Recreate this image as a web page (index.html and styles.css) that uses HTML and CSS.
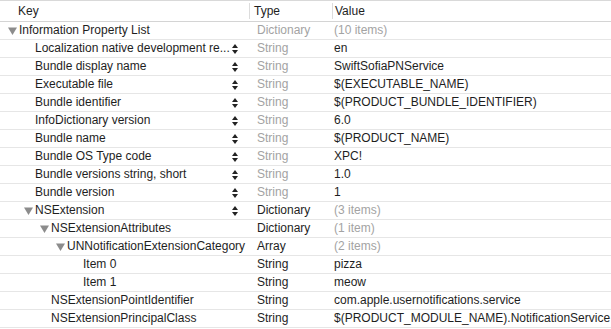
FILE: index.html
```html
<!DOCTYPE html>
<html lang="en">
<head>
    <meta charset="UTF-8">
    <title>Info.plist</title>
    <link rel="stylesheet" href="styles.css">
</head>
<body>

<div class="plist">
    <!-- Column headers -->
    <div class="row header">
        <div class="cell key">Key</div>
        <div class="cell type">Type</div>
        <div class="cell value">Value</div>
    </div>

    <div class="row lvl0">
        <div class="cell key"><span class="tri"><svg width="9" height="8" viewBox="0 0 9 8"><path d="M0 0.5 H9 L4.5 8 Z" fill="#8c8c8c"/></svg></span>Information Property List</div>
        <div class="cell type muted">Dictionary</div>
        <div class="cell value muted">(10 items)</div>
    </div>

    <div class="row lvl1">
        <div class="cell key"><span class="name">Localization native development re...</span><span class="step"><svg width="6" height="12" viewBox="0 0 6 12"><path d="M3 1 L6 5 H0 Z M0 7 H6 L3 11 Z" fill="#222"/></svg></span></div>
        <div class="cell type muted">String</div>
        <div class="cell value">en</div>
    </div>
    <div class="row lvl1">
        <div class="cell key"><span class="name">Bundle display name</span><span class="step"><svg width="6" height="12" viewBox="0 0 6 12"><path d="M3 1 L6 5 H0 Z M0 7 H6 L3 11 Z" fill="#222"/></svg></span></div>
        <div class="cell type muted">String</div>
        <div class="cell value">SwiftSofiaPNService</div>
    </div>
    <div class="row lvl1">
        <div class="cell key"><span class="name">Executable file</span><span class="step"><svg width="6" height="12" viewBox="0 0 6 12"><path d="M3 1 L6 5 H0 Z M0 7 H6 L3 11 Z" fill="#222"/></svg></span></div>
        <div class="cell type muted">String</div>
        <div class="cell value">$(EXECUTABLE_NAME)</div>
    </div>
    <div class="row lvl1">
        <div class="cell key"><span class="name">Bundle identifier</span><span class="step"><svg width="6" height="12" viewBox="0 0 6 12"><path d="M3 1 L6 5 H0 Z M0 7 H6 L3 11 Z" fill="#222"/></svg></span></div>
        <div class="cell type muted">String</div>
        <div class="cell value">$(PRODUCT_BUNDLE_IDENTIFIER)</div>
    </div>
    <div class="row lvl1">
        <div class="cell key"><span class="name">InfoDictionary version</span><span class="step"><svg width="6" height="12" viewBox="0 0 6 12"><path d="M3 1 L6 5 H0 Z M0 7 H6 L3 11 Z" fill="#222"/></svg></span></div>
        <div class="cell type muted">String</div>
        <div class="cell value">6.0</div>
    </div>
    <div class="row lvl1">
        <div class="cell key"><span class="name">Bundle name</span><span class="step"><svg width="6" height="12" viewBox="0 0 6 12"><path d="M3 1 L6 5 H0 Z M0 7 H6 L3 11 Z" fill="#222"/></svg></span></div>
        <div class="cell type muted">String</div>
        <div class="cell value">$(PRODUCT_NAME)</div>
    </div>
    <div class="row lvl1">
        <div class="cell key"><span class="name">Bundle OS Type code</span><span class="step"><svg width="6" height="12" viewBox="0 0 6 12"><path d="M3 1 L6 5 H0 Z M0 7 H6 L3 11 Z" fill="#222"/></svg></span></div>
        <div class="cell type muted">String</div>
        <div class="cell value">XPC!</div>
    </div>
    <div class="row lvl1">
        <div class="cell key"><span class="name">Bundle versions string, short</span><span class="step"><svg width="6" height="12" viewBox="0 0 6 12"><path d="M3 1 L6 5 H0 Z M0 7 H6 L3 11 Z" fill="#222"/></svg></span></div>
        <div class="cell type muted">String</div>
        <div class="cell value">1.0</div>
    </div>
    <div class="row lvl1">
        <div class="cell key"><span class="name">Bundle version</span><span class="step"><svg width="6" height="12" viewBox="0 0 6 12"><path d="M3 1 L6 5 H0 Z M0 7 H6 L3 11 Z" fill="#222"/></svg></span></div>
        <div class="cell type muted">String</div>
        <div class="cell value">1</div>
    </div>
    <div class="row lvl1">
        <div class="cell key"><span class="tri"><svg width="9" height="8" viewBox="0 0 9 8"><path d="M0 0.5 H9 L4.5 8 Z" fill="#8c8c8c"/></svg></span><span class="name">NSExtension</span><span class="step"><svg width="6" height="12" viewBox="0 0 6 12"><path d="M3 1 L6 5 H0 Z M0 7 H6 L3 11 Z" fill="#222"/></svg></span></div>
        <div class="cell type">Dictionary</div>
        <div class="cell value muted">(3 items)</div>
    </div>

    <div class="row lvl2">
        <div class="cell key"><span class="tri"><svg width="9" height="8" viewBox="0 0 9 8"><path d="M0 0.5 H9 L4.5 8 Z" fill="#8c8c8c"/></svg></span>NSExtensionAttributes</div>
        <div class="cell type">Dictionary</div>
        <div class="cell value muted">(1 item)</div>
    </div>
    <div class="row lvl3">
        <div class="cell key"><span class="tri"><svg width="9" height="8" viewBox="0 0 9 8"><path d="M0 0.5 H9 L4.5 8 Z" fill="#8c8c8c"/></svg></span>UNNotificationExtensionCategory</div>
        <div class="cell type">Array</div>
        <div class="cell value muted">(2 items)</div>
    </div>
    <div class="row lvl4">
        <div class="cell key">Item 0</div>
        <div class="cell type">String</div>
        <div class="cell value">pizza</div>
    </div>
    <div class="row lvl4">
        <div class="cell key">Item 1</div>
        <div class="cell type">String</div>
        <div class="cell value">meow</div>
    </div>
    <div class="row lvl2">
        <div class="cell key">NSExtensionPointIdentifier</div>
        <div class="cell type">String</div>
        <div class="cell value">com.apple.usernotifications.service</div>
    </div>
    <div class="row lvl2">
        <div class="cell key">NSExtensionPrincipalClass</div>
        <div class="cell type">String</div>
        <div class="cell value">$(PRODUCT_MODULE_NAME).NotificationService</div>
    </div>
</div>

</body>
</html>
```

FILE: styles.css
```css
body {
    margin: 0;
    background: #fff;
    font-family: "Liberation Sans", Arial, sans-serif;
    font-size: 12px;
    color: #1e1e1e;
}
.plist {
    width: 611px;
}
.row {
    display: grid;
    grid-template-columns: 249px 83px 1fr;
    height: 18px;
    border-bottom: 1px solid #e6e6e6;
    box-sizing: border-box;
}
.cell {
    display: flex;
    align-items: center;
    white-space: nowrap;
    overflow: hidden;
    line-height: 17px;
}
.type {
    padding-left: 8px;
}
.value {
    padding-left: 2px;
}
.muted {
    color: #a3a3a3;
}

/* header */
.header {
    height: 22px;
    border-top: 1px solid #d9d9d9;
    border-bottom: 1px solid #d4d4d4;
}
.header .cell {
    line-height: 20px;
}
.header .key {
    padding-left: 18px;
}
.header .type {
    padding-left: 4px;
    border-left: 1px solid #dcdcdc;
    margin: 2px 0;
}
.header .value {
    padding-left: 2px;
    border-left: 1px solid #dcdcdc;
    margin: 2px 0;
}

/* tree indentation */
.lvl0 .key { padding-left: 19px; }
.lvl1 .key { padding-left: 35px; }
.lvl2 .key { padding-left: 51px; }
.lvl3 .key { padding-left: 67px; }
.lvl4 .key { padding-left: 83px; }

.key {
    position: relative;
}
.tri {
    position: absolute;
    top: 5px;
    margin-left: -11px;
    line-height: 0;
}
.name {
    flex: 1;
    min-width: 0;
}
.step {
    flex: none;
    width: 6px;
    margin: 0 11px 0 2px;
    line-height: 0;
}
```
